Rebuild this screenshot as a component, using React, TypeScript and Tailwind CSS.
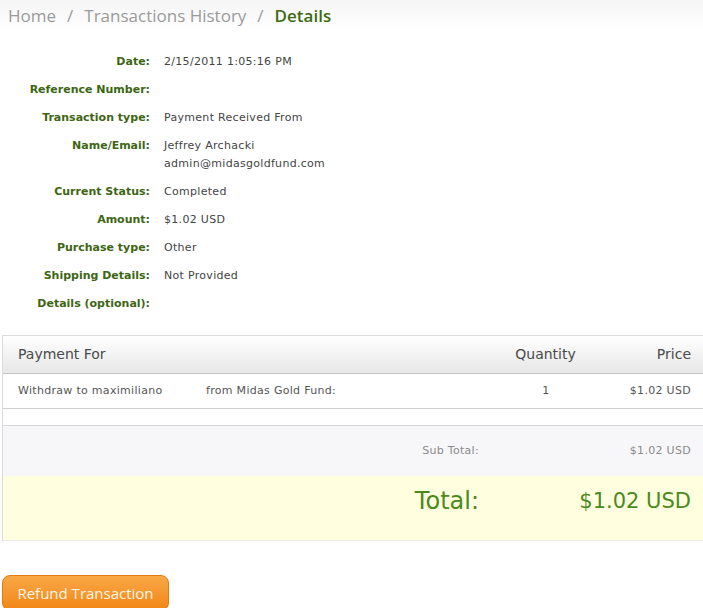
import React from "react";

const rows: { label: string; value: React.ReactNode }[] = [
  { label: "Date:", value: "2/15/2011 1:05:16 PM" },
  { label: "Reference Number:", value: "" },
  { label: "Transaction type:", value: "Payment Received From" },
  {
    label: "Name/Email:",
    value: (
      <>
        Jeffrey Archacki
        <br />
        admin@midasgoldfund.com
      </>
    ),
  },
  { label: "Current Status:", value: "Completed" },
  { label: "Amount:", value: "$1.02 USD" },
  { label: "Purchase type:", value: "Other" },
  { label: "Shipping Details:", value: "Not Provided" },
  { label: "Details (optional):", value: "" },
];

export default function App() {
  return (
    <div className="min-h-[608px] w-[703px] overflow-hidden bg-white font-['DejaVu_Sans',sans-serif]">
      {/* breadcrumb */}
      <div className="flex h-[32px] items-center bg-gradient-to-b from-[#f5f5f5] to-white px-[8px] font-['Open_Sans',sans-serif] text-[17px] text-[#9a9a9a]">
        <span>Home</span>
        <span className="mx-[11px]">/</span>
        <span>Transactions History</span>
        <span className="mx-[11px]">/</span>
        <span className="font-semibold text-[#3f6b12]">Details</span>
      </div>

      {/* details */}
      <div className="mt-[16px]">
        {rows.map((r) => (
          <div key={r.label} className="flex py-[5px] text-[11px] leading-[18px]">
            <div className="w-[150px] shrink-0 text-right font-bold text-[#3d6614]">
              {r.label}
            </div>
            <div className="pl-[14px] tracking-[0.3px] text-[#444]">{r.value}</div>
          </div>
        ))}
      </div>

      {/* table */}
      <div className="ml-[2px] mt-[17px] border-l border-t border-[#dcdcdc]">
        <div className="flex h-[38px] items-center border-b border-[#c4c4c4] bg-gradient-to-b from-white to-[#e7e7e7] text-[14px] text-[#4a4a4a]">
          <div className="flex-1 pl-[15px]">Payment For</div>
          <div className="w-[96px] pl-[5px] text-center">Quantity</div>
          <div className="w-[112px] pr-[12px] text-right">Price</div>
        </div>
        <div className="flex h-[35px] items-center border-b border-[#cfcfcf] text-[11px] tracking-[0.3px] text-[#555]">
          <div className="w-[203px] pl-[15px]">Withdraw to maximiliano</div>
          <div className="flex-1">from Midas Gold Fund:</div>
          <div className="w-[96px] pl-[6px] text-center">1</div>
          <div className="w-[112px] pr-[12px] text-right">$1.02 USD</div>
        </div>
        <div className="h-[16px] bg-white" />
        <div className="flex h-[51px] items-center border-t border-[#d6d6d6] bg-[#f7f7f9] text-[11px] tracking-[0.3px] text-[#8a8a8a]">
          <div className="flex-1 text-right">Sub Total:</div>
          <div className="w-[224px] pr-[12px] text-right">$1.02 USD</div>
        </div>
        <div className="flex h-[65px] items-start border-b border-[#ececec] bg-[#ffffdf] pt-[7px] text-[#4b8a1c]">
          <div className="flex-1 text-right text-[24px]">Total:</div>
          <div className="w-[224px] pr-[12px] pt-[3px] text-right text-[21px]">$1.02 USD</div>
        </div>
      </div>

      <div className="ml-[2px] mt-[34px]">
        <button className="h-[36px] w-[167px] rounded-[8px] border border-[#e17c12] bg-gradient-to-b from-[#f9a845] to-[#f1860f] font-['Open_Sans',sans-serif] text-[15px] text-[#fff6e6]">
          Refund Transaction
        </button>
      </div>
    </div>
  );
}
